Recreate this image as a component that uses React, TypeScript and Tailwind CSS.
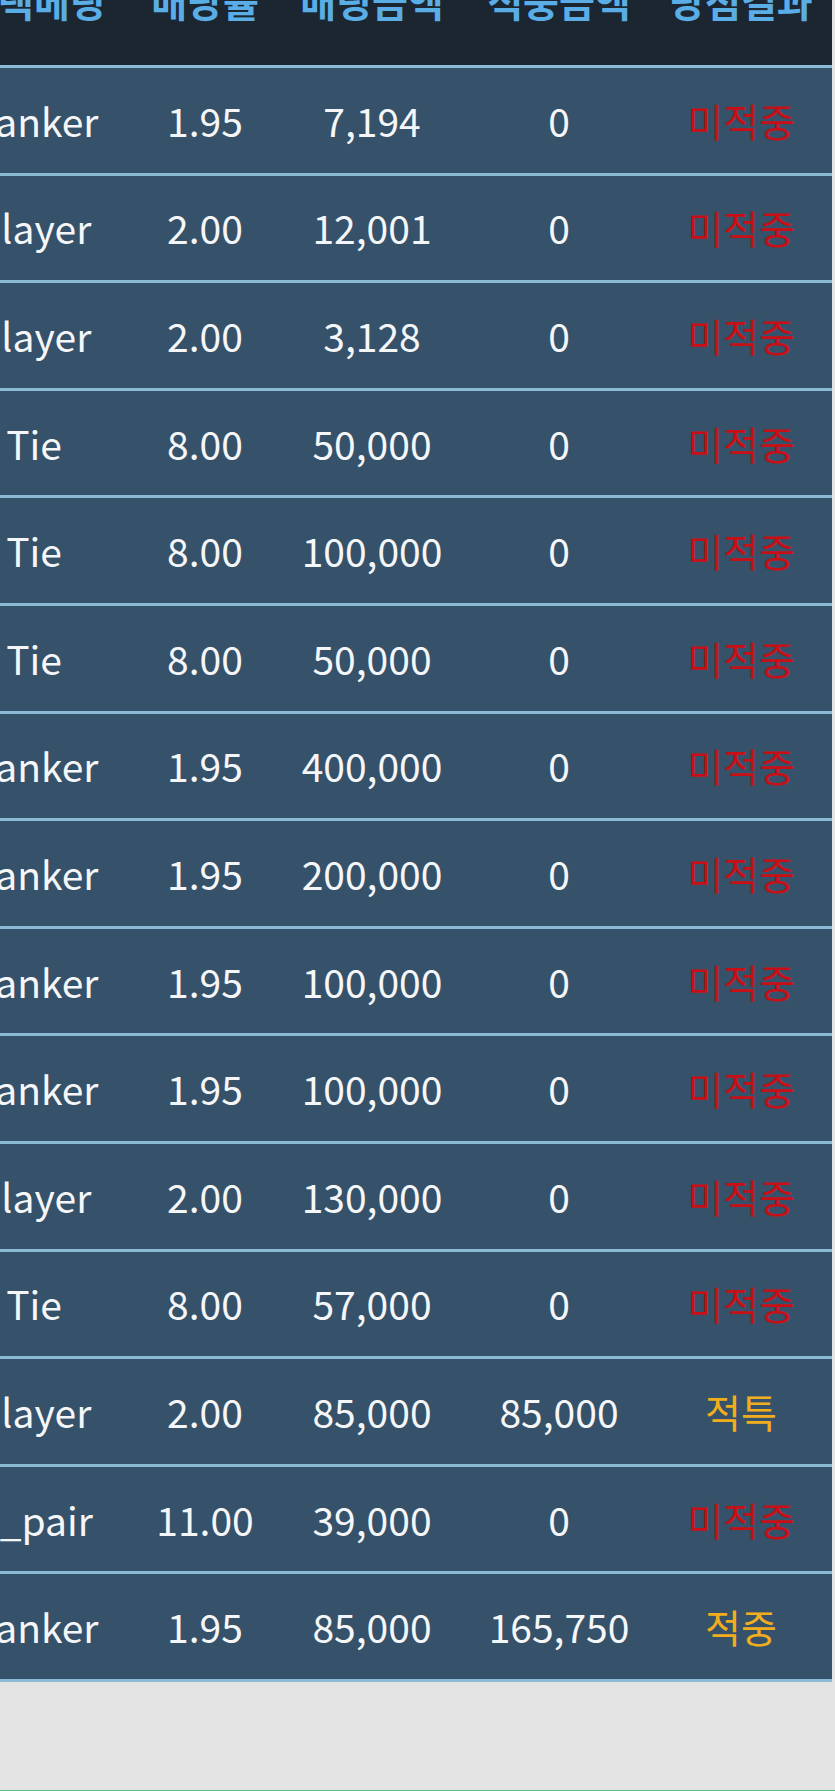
import React from "react";

type Row = [string, string, string, string, string, "miss" | "hit"];

const rows: Row[] = [
  ["Banker", "1.95", "7,194", "0", "미적중", "miss"],
  ["Player", "2.00", "12,001", "0", "미적중", "miss"],
  ["Player", "2.00", "3,128", "0", "미적중", "miss"],
  ["Tie", "8.00", "50,000", "0", "미적중", "miss"],
  ["Tie", "8.00", "100,000", "0", "미적중", "miss"],
  ["Tie", "8.00", "50,000", "0", "미적중", "miss"],
  ["Banker", "1.95", "400,000", "0", "미적중", "miss"],
  ["Banker", "1.95", "200,000", "0", "미적중", "miss"],
  ["Banker", "1.95", "100,000", "0", "미적중", "miss"],
  ["Banker", "1.95", "100,000", "0", "미적중", "miss"],
  ["Player", "2.00", "130,000", "0", "미적중", "miss"],
  ["Tie", "8.00", "57,000", "0", "미적중", "miss"],
  ["Player", "2.00", "85,000", "85,000", "적특", "hit"],
  ["P_pair", "11.00", "39,000", "0", "미적중", "miss"],
  ["Banker", "1.95", "85,000", "165,750", "적중", "hit"],
];

const headers = ["선택베팅", "배당률", "배팅금액", "적중금액", "당첨결과"];

export default function App() {
  return (
    <div
      className="w-[835px] h-[1791px] bg-[#e4e4e4] overflow-hidden flex flex-col border-b border-[#5cbf7e]"
      style={{ fontFamily: '"Noto Sans CJK KR", "Noto Sans", sans-serif' }}
    >
      <div className="w-[832px] overflow-hidden">
        <div className="ml-[-66px] w-[898px] flex flex-col text-[39px]">
          <div className="grid grid-cols-[200px_142px_192px_182px_182px] items-start h-[65px] overflow-hidden bg-[#1b2631] text-[#5bade6] font-bold">
            {headers.map((h) => (
              <div key={h} className="mt-[-19px] leading-[39px] text-center whitespace-nowrap">
                {h}
              </div>
            ))}
          </div>
          {rows.map((r, i) => (
            <div
              key={i}
              className="grid grid-cols-[200px_142px_192px_182px_182px] h-[107.6px] border-t-[3px] border-[#8cb9d3] bg-[#36516a] text-[#f4f6f8]"
            >
              {r.slice(0, 4).map((c, j) => (
                <div key={j} className="flex items-center justify-center leading-none whitespace-nowrap">
                  {c}
                </div>
              ))}
              <div
                className={
                  "flex items-center justify-center leading-none whitespace-nowrap " +
                  (r[5] === "hit" ? "text-[#f2ad1c]" : "text-[#c70f16]")
                }
              >
                {r[4]}
              </div>
            </div>
          ))}
          <div className="h-[3px] bg-[#8cb9d3]" />
        </div>
      </div>
    </div>
  );
}
